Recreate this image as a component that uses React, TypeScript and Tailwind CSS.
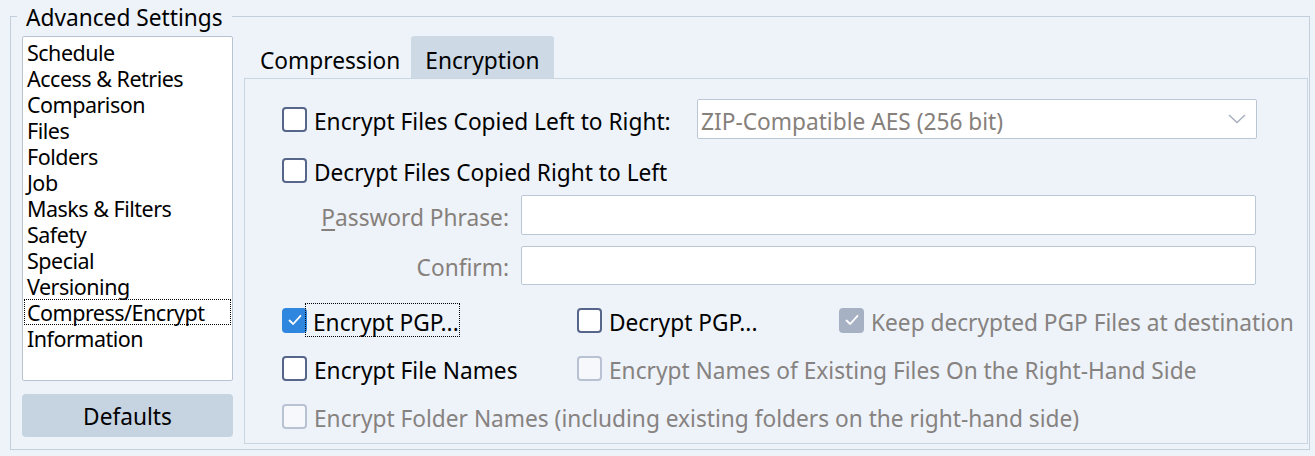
import React from "react";

const FONT = "font-['Noto_Sans','Open_Sans',sans-serif]";

function Check({ state }: { state: "off" | "on" | "disOff" | "disOn" }) {
  if (state === "on" || state === "disOn") {
    const bg = state === "on" ? "bg-[#2f86de]" : "bg-[#a7b1c4]";
    return (
      <div className={`w-[25px] h-[25px] rounded-[4px] ${bg} flex items-center justify-center shrink-0`}>
        <svg width="18" height="18" viewBox="0 0 18 18" fill="none">
          <path d="M3.5 9.5 L7.2 13 L14.5 4.8" stroke="white" strokeWidth="1.8" strokeLinecap="round" strokeLinejoin="round" />
        </svg>
      </div>
    );
  }
  const cls =
    state === "off"
      ? "border-2 border-[#56668a] bg-white"
      : "border-2 border-[#b9c2d3] bg-[#f6f8fc]";
  return <div className={`w-[25px] h-[25px] rounded-[4px] ${cls} shrink-0`} />;
}

function CheckRow({
  state,
  label,
  width,
  focus,
}: {
  state: "off" | "on" | "disOff" | "disOn";
  label: string;
  width?: string;
  focus?: boolean;
}) {
  const disabled = state === "disOff" || state === "disOn";
  return (
    <div className={`flex items-center ${width ?? ""}`}>
      <Check state={state} />
      {focus ? (
        <span className="ml-[-2px] pl-[8px] pr-[1px] h-[34px] pt-[5px] flex items-center outline-1 outline-dotted outline-black -outline-offset-1 text-black whitespace-nowrap">
          {label}
        </span>
      ) : (
        <span className={`ml-[7px] pt-[5px] whitespace-nowrap ${disabled ? "text-[#868280]" : "text-black"}`}>{label}</span>
      )}
    </div>
  );
}

export default function App() {
  const items = [
    "Schedule",
    "Access & Retries",
    "Comparison",
    "Files",
    "Folders",
    "Job",
    "Masks & Filters",
    "Safety",
    "Special",
    "Versioning",
    "Compress/Encrypt",
    "Information",
  ];
  return (
    <div className={`w-[1315px] h-[456px] bg-[#eef3fa] ${FONT} text-[22.7px] leading-[26px] pt-[1px] pl-[10px]`}>
      <fieldset className="w-[1300px] h-[449px] border border-[#c3cfdc] pl-[11px] pr-[1px]">
        <legend className="-ml-[5px] px-[9px] pt-[4px] text-black leading-[26px]">Advanced Settings</legend>
        <div className="flex pt-[5px] gap-[11px]">
          {/* left column */}
          <div className="w-[211px] flex flex-col">
            <div className="h-[345px] bg-white border border-[#b7c3d3] rounded-[2px] pt-[2px] px-[1px]">
              {items.map((it) => (
                <div
                  key={it}
                  className={`h-[26px] pl-[3px] pt-[1px] text-[21.5px] tracking-[-0.5px] leading-[24px] text-black flex items-center whitespace-nowrap ${
                    it === "Compress/Encrypt" ? "outline-1 outline-dotted outline-black -outline-offset-1" : ""
                  }`}
                >
                  {it}
                </div>
              ))}
            </div>
            <div className="mt-[13px] h-[43px] pt-[3px] bg-[#c6d3e0] rounded-[4px] flex items-center justify-center text-black">
              Defaults
            </div>
          </div>

          {/* right column */}
          <div className="flex-1 flex flex-col">
            <div className="flex h-[42px] items-end">
              <div className="h-[42px] pl-[16px] pr-[11px] pt-[7px] flex items-center text-black">Compression</div>
              <div className="h-[42px] px-[14px] pt-[7px] flex items-center bg-[#cdd9e5] rounded-t-[3px] text-black">
                Encryption
              </div>
            </div>
            <div className="h-[366px] border border-[#c9d5e1] pl-[37px] pt-[20px] flex flex-col">
              <div className="flex items-center h-[40px]">
                <CheckRow state="off" label="Encrypt Files Copied Left to Right:" width="w-[415px]" />
                <div className="w-[560px] h-[40px] bg-white border border-[#bcc7d6] rounded-[2px] flex items-center justify-between pl-[3px] pr-[10px]">
                  <span className="text-[#86807b] pt-[5px]">ZIP-Compatible AES (256 bit)</span>
                  <svg width="18" height="10" viewBox="0 0 18 10" fill="none">
                    <path d="M1 1 L9 8.5 L17 1" stroke="#a3acbc" strokeWidth="1.3" />
                  </svg>
                </div>
              </div>
              <div className="flex items-center h-[40px] mt-[11px]">
                <CheckRow state="off" label="Decrypt Files Copied Right to Left" />
              </div>
              <div className="flex items-center h-[40px] mt-[5px]">
                <div className="w-[227px] pt-[6px] text-right text-[#86807b] whitespace-nowrap">
                  <span className="underline underline-offset-[3px]">P</span>assword Phrase:
                </div>
                <div className="ml-[12px] w-[735px] h-[40px] bg-white border border-[#bcc7d6] rounded-[2px]" />
              </div>
              <div className="flex items-center h-[40px] mt-[10px]">
                <div className="w-[227px] pt-[6px] text-right text-[#86807b]">Confirm:</div>
                <div className="ml-[12px] w-[735px] h-[39px] bg-white border border-[#bcc7d6] rounded-[2px]" />
              </div>
              <div className="flex items-center h-[40px] mt-[15px]">
                <CheckRow state="on" label="Encrypt PGP..." width="w-[295px]" focus />
                <CheckRow state="off" label="Decrypt PGP..." width="w-[262px]" />
                <CheckRow state="disOn" label="Keep decrypted PGP Files at destination" />
              </div>
              <div className="flex items-center h-[40px] mt-[8px]">
                <CheckRow state="off" label="Encrypt File Names" width="w-[295px]" />
                <CheckRow state="disOff" label="Encrypt Names of Existing Files On the Right-Hand Side" />
              </div>
              <div className="flex items-center h-[40px] mt-[8px]">
                <CheckRow state="disOff" label="Encrypt Folder Names (including existing folders on the right-hand side)" />
              </div>
            </div>
          </div>
        </div>
      </fieldset>
    </div>
  );
}
